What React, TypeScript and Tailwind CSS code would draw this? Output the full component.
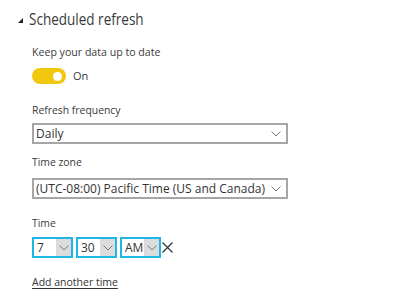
const font = { fontFamily: '"Segoe UI", "Open Sans", "Liberation Sans", sans-serif' };

function Chevron() {
  return (
    <svg width="10" height="6" viewBox="0 0 10 6">
      <polyline points="0.5,0.5 5,5 9.5,0.5" fill="none" stroke="#7a7a7a" strokeWidth="1" />
    </svg>
  );
}

function Select({ value, className = '' }: { value: string; className?: string }) {
  return (
    <div className={`flex items-center justify-between w-[256px] border-2 border-[#a6a6a6] bg-white pl-[2px] pr-[5px] ${className}`}>
      <span className="text-[12px] text-[#333] leading-none">{value}</span>
      <Chevron />
    </div>
  );
}

function TimeSelect({ value }: { value: string }) {
  return (
    <div className="flex h-[21px] w-[41px] border-2 border-[#1fb5e5] bg-white">
      <span className="flex-1 flex items-center pl-[3px] text-[12px] text-[#333] leading-none">{value}</span>
      <div className="w-[15px] bg-[#dcdcdc] flex items-center justify-center">
        <Chevron />
      </div>
    </div>
  );
}

export default function App() {
  return (
    <div className="w-[400px] h-[300px] bg-white overflow-hidden text-[#3b3b3b]" style={font}>
      {/* Section header */}
      <div className="flex items-center h-[24px] mt-[7px] pl-[18px]">
        <svg width="5" height="5" viewBox="0 0 5 5" className="mr-[6px] mt-[2px] shrink-0">
          <polygon points="5,0 5,5 0,5" fill="#222" />
        </svg>
        <span className="text-[16px] text-[#3a3a3a] leading-none whitespace-nowrap origin-left scale-x-[0.845]">Scheduled refresh</span>
      </div>

      <div className="pl-[32px] flex flex-col">
        <div className="mt-[13px] h-[18px] flex items-center text-[10.6px]">Keep your data up to date</div>

        {/* Toggle */}
        <div className="mt-[6px] flex items-center h-[16px]">
          <div className="relative w-[34px] h-[16px] rounded-full bg-[#f2c80f]">
            <div className="absolute right-[4px] top-[3.5px] w-[9px] h-[9px] rounded-full bg-white" />
          </div>
          <span className="ml-[7px] text-[11px]">On</span>
        </div>

        <div className="mt-[18px] h-[18px] flex items-center text-[10.4px]">Refresh frequency</div>
        <Select value="Daily" className="mt-[3px] h-[21px]" />

        <div className="mt-[10px] h-[18px] flex items-center text-[10.4px]">Time zone</div>
        <Select value="(UTC-08:00) Pacific Time (US and Canada)" className="mt-[6px] h-[21px]" />

        <div className="mt-[16px] h-[18px] flex items-center text-[10.4px]">Time</div>
        <div className="mt-[4px] flex items-center gap-[3px]">
          <TimeSelect value="7" />
          <TimeSelect value="30" />
          <TimeSelect value="AM" />
          <svg width="11" height="11" viewBox="0 0 11 11" className="-ml-[2px]">
            <path d="M0.5 0.5 L10.5 10.5 M10.5 0.5 L0.5 10.5" stroke="#333" strokeWidth="1.2" fill="none" />
          </svg>
        </div>

        <div className="mt-[16px] h-[18px] flex items-center">
          <a className="text-[10.5px] text-[#333] underline underline-offset-2">Add another time</a>
        </div>
      </div>
    </div>
  );
}
